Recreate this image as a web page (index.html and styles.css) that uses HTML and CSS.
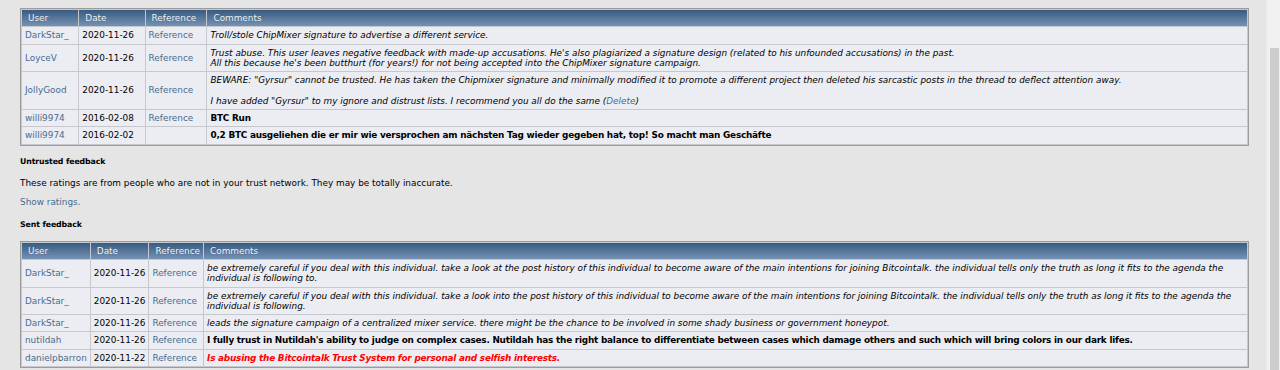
FILE: index.html
```html
<!DOCTYPE html>
<html lang="en">
<head>
<meta charset="utf-8">
<title>Trust</title>
<link rel="stylesheet" href="styles.css">
</head>
<body>
<div class="window">
  <main class="page">
    <div class="tborder">
      <table class="feedback">
        <tr class="catbg3"><td>User</td><td>Date</td><td>Reference</td><td>Comments</td></tr>
        <tr><td><a href="#">DarkStar_</a></td><td class="date">2020-11-26</td><td><a href="#">Reference</a></td><td><i>Troll/stole ChipMixer signature to advertise a different service.</i></td></tr>
        <tr><td><a href="#">LoyceV</a></td><td class="date">2020-11-26</td><td><a href="#">Reference</a></td><td><i>Trust abuse. This user leaves negative feedback with made-up accusations. He's also plagiarized a signature design (related to his unfounded accusations) in the past.<br>All this because he's been butthurt (for years!) for not being accepted into the ChipMixer signature campaign.</i></td></tr>
        <tr><td><a href="#">JollyGood</a></td><td class="date">2020-11-26</td><td><a href="#">Reference</a></td><td><i>BEWARE: "Gyrsur" cannot be trusted. He has taken the Chipmixer signature and minimally modified it to promote a different project then deleted his sarcastic posts in the thread to deflect attention away.<br><br>I have added "Gyrsur" to my ignore and distrust lists. I recommend you all do the same (<a href="#">Delete</a>)</i></td></tr>
        <tr><td><a href="#">willi9974</a></td><td class="date">2016-02-08</td><td><a href="#">Reference</a></td><td><b>BTC Run</b></td></tr>
        <tr><td><a href="#">willi9974</a></td><td class="date">2016-02-02</td><td></td><td><b>0,2 BTC ausgeliehen die er mir wie versprochen am nächsten Tag wieder gegeben hat, top! So macht man Geschäfte</b></td></tr>
      </table>
    </div>

    <h3 class="heading">Untrusted feedback</h3>
    <p class="note">These ratings are from people who are not in your trust network. They may be totally inaccurate.</p>
    <p class="note"><a href="#">Show ratings.</a></p>

    <h3 class="heading">Sent feedback</h3>
    <div class="tborder">
      <table class="feedback">
        <tr class="catbg3"><td>User</td><td>Date</td><td>Reference</td><td>Comments</td></tr>
        <tr><td><a href="#">DarkStar_</a></td><td class="date">2020-11-26</td><td><a href="#">Reference</a></td><td><i>be extremely careful if you deal with this individual. take a look at the post history of this individual to become aware of the main intentions for joining Bitcointalk. the individual tells only the truth as long it fits to the agenda the individual is following to.</i></td></tr>
        <tr><td><a href="#">DarkStar_</a></td><td class="date">2020-11-26</td><td><a href="#">Reference</a></td><td><i>be extremely careful if you deal with this individual. take a look into the post history of this individual to become aware of the main intentions for joining Bitcointalk. the individual tells only the truth as long it fits to the agenda the individual is following.</i></td></tr>
        <tr><td><a href="#">DarkStar_</a></td><td class="date">2020-11-26</td><td><a href="#">Reference</a></td><td><i>leads the signature campaign of a centralized mixer service. there might be the chance to be involved in some shady business or government honeypot.</i></td></tr>
        <tr><td><a href="#">nutildah</a></td><td class="date">2020-11-26</td><td><a href="#">Reference</a></td><td><b>I fully trust in Nutildah's ability to judge on complex cases. Nutildah has the right balance to differentiate between cases which damage others and such which will bring colors in our dark lifes.</b></td></tr>
        <tr><td><a href="#">danielpbarron</a></td><td class="date">2020-11-22</td><td><a href="#">Reference</a></td><td><b class="abuse"><i>Is abusing the Bitcointalk Trust System for personal and selfish interests.</i></b></td></tr>
      </table>
    </div>
  </main>

  <div class="scrollbar" aria-hidden="true">
    <div class="scrollbar-thumb"></div>
  </div>
</div>
</body>
</html>
```

FILE: styles.css
```css
html, body {
  margin: 0;
  padding: 0;
}

body {
  background: #e5e5e5;
  color: #000;
  font-family: "DejaVu Sans", Verdana, sans-serif;
  font-size: 8.9px;
  line-height: 10px;
}

.window {
  display: flex;
  height: 100vh;
  overflow: hidden;
}

.page {
  flex: 1;
  min-width: 0;
  padding: 8px 17px 0 20px;
}

/* window scrollbar, resting near the end of the page */
.scrollbar {
  flex: none;
  width: 14px;
  display: flex;
  flex-direction: column;
  padding: 48px 1px 0 3px;
  box-sizing: border-box;
  background: #f0f0f0;
  border-left: 1px solid #e9e9e9;
}

.scrollbar-thumb {
  flex: 1;
  background: #cdcdcd;
}

a {
  color: #476c8e;
  text-decoration: none;
}

b {
  letter-spacing: -0.22px;
}

.tborder {
  border: 1px solid #9c9c9c;
  background: #c6c8ce;
}

.feedback {
  width: 100%;
  border-collapse: separate;
  border-spacing: 1px;
  background: #c6c8ce;
  font-size: inherit;
  line-height: 10.3px;
}

.feedback td {
  background: #ecedf3;
  padding: 3px 3px;
  vertical-align: middle;
}

.feedback .date {
  white-space: nowrap;
}

.feedback .catbg3 td {
  background: linear-gradient(#385b81, #7592b4);
  color: #f2f5f8;
  padding-left: 6px;
  text-shadow: 0 0 1px rgba(20, 40, 70, 0.35);
}

.abuse {
  color: #ff0000;
}

.heading {
  margin: 11px 0 11px;
  font-size: 7.8px;
  line-height: 10px;
  letter-spacing: -0.1px;
  font-weight: bold;
}

.note {
  margin: 0 0 9px;
}

.note + .heading {
  margin-top: 13px;
}
```
